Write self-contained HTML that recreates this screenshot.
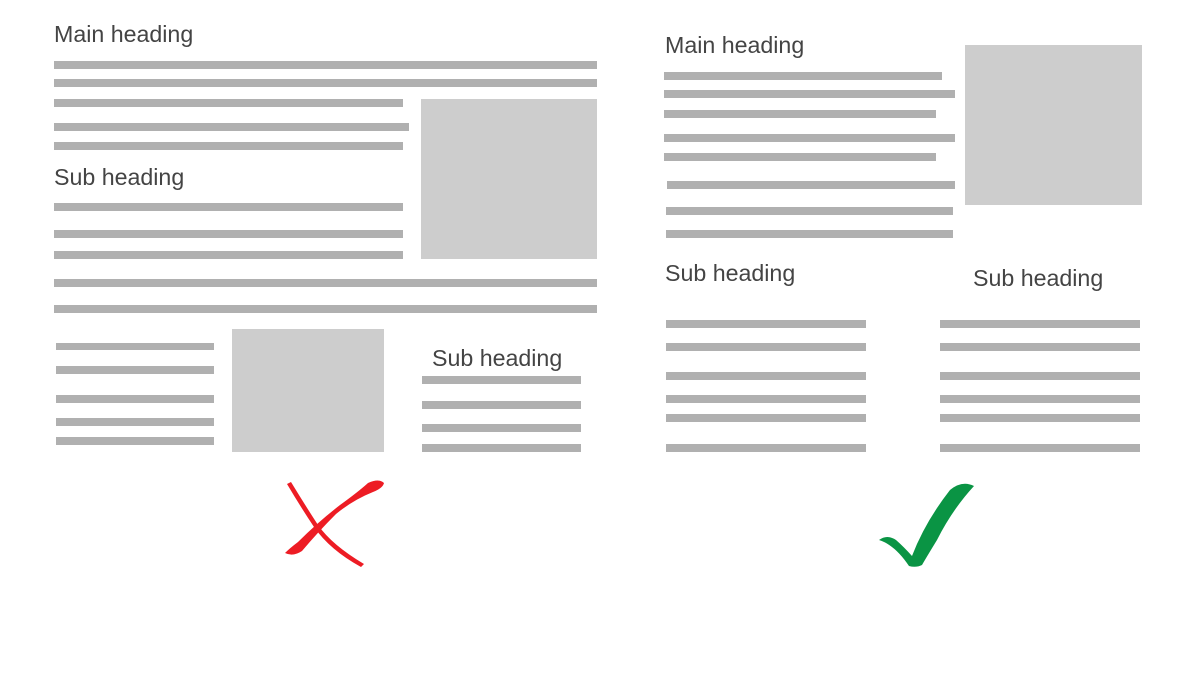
<!DOCTYPE html>
<html><head><meta charset="utf-8"><style>
html,body{margin:0;padding:0;background:#fff;width:1200px;height:690px;overflow:hidden}
svg text{font-family:"Liberation Sans",Arial,sans-serif;font-size:23.2px;fill:#444}
</style></head><body>
<svg width="1200" height="690" xmlns="http://www.w3.org/2000/svg">
<g fill="#b0b0b0">
<rect x="54" y="61" width="543" height="8"/>
<rect x="54" y="79" width="543" height="8"/>
<rect x="54" y="99" width="349" height="8"/>
<rect x="54" y="123" width="355" height="8"/>
<rect x="54" y="142" width="349" height="8"/>
<rect x="54" y="203" width="349" height="8"/>
<rect x="54" y="230" width="349" height="8"/>
<rect x="54" y="251" width="349" height="8"/>
<rect x="54" y="279" width="543" height="8"/>
<rect x="54" y="305" width="543" height="8"/>
<rect x="56" y="343" width="158" height="7"/>
<rect x="56" y="366" width="158" height="8"/>
<rect x="56" y="395" width="158" height="8"/>
<rect x="56" y="418" width="158" height="8"/>
<rect x="56" y="437" width="158" height="8"/>
<rect x="422" y="376" width="159" height="8"/>
<rect x="422" y="401" width="159" height="8"/>
<rect x="422" y="424" width="159" height="8"/>
<rect x="422" y="444" width="159" height="8"/>
<rect x="664" y="72" width="278" height="8"/>
<rect x="664" y="90" width="291" height="8"/>
<rect x="664" y="110" width="272" height="8"/>
<rect x="664" y="134" width="291" height="8"/>
<rect x="664" y="153" width="272" height="8"/>
<rect x="667" y="181" width="288" height="8"/>
<rect x="666" y="207" width="287" height="8"/>
<rect x="666" y="230" width="287" height="8"/>
<rect x="666" y="320" width="200" height="8"/>
<rect x="666" y="343" width="200" height="8"/>
<rect x="666" y="372" width="200" height="8"/>
<rect x="666" y="395" width="200" height="8"/>
<rect x="666" y="414" width="200" height="8"/>
<rect x="666" y="444" width="200" height="8"/>
<rect x="940" y="320" width="200" height="8"/>
<rect x="940" y="343" width="200" height="8"/>
<rect x="940" y="372" width="200" height="8"/>
<rect x="940" y="395" width="200" height="8"/>
<rect x="940" y="414" width="200" height="8"/>
<rect x="940" y="444" width="200" height="8"/>
</g>
<g fill="#cdcdcd">
<rect x="421" y="99" width="176" height="160"/>
<rect x="232" y="329" width="152" height="123"/>
<rect x="965" y="45" width="177" height="160"/>
</g>
<text x="54" y="42">Main heading</text>
<text x="54" y="185">Sub heading</text>
<text x="432" y="366">Sub heading</text>
<text x="665" y="53">Main heading</text>
<text x="665" y="281">Sub heading</text>
<text x="973" y="286">Sub heading</text>
<path d="M287 484 L291 482 Q305 505 318 525 Q332 545 364 564 L361 567 Q330 550 314 527 Q300 506 287 484Z" fill="#ed1c24"/>
<path d="M384 483 Q379 478 368 483 Q358 492 340 505 Q318 522 298 542 Q290 548 285 553 Q293 557 302 551 Q318 532 336 514 Q353 500 373 492 Q383 488 384 483Z" fill="#ed1c24"/>
<path d="M879 540 Q887 534 896 540 Q904 547 912 556 Q925 522 950 490 Q962 480 974 486 Q952 510 937 540 Q926 558 922 565 Q916 568 909 566 Q895 545 879 540Z" fill="#0a9444"/>
</svg>
</body></html>
